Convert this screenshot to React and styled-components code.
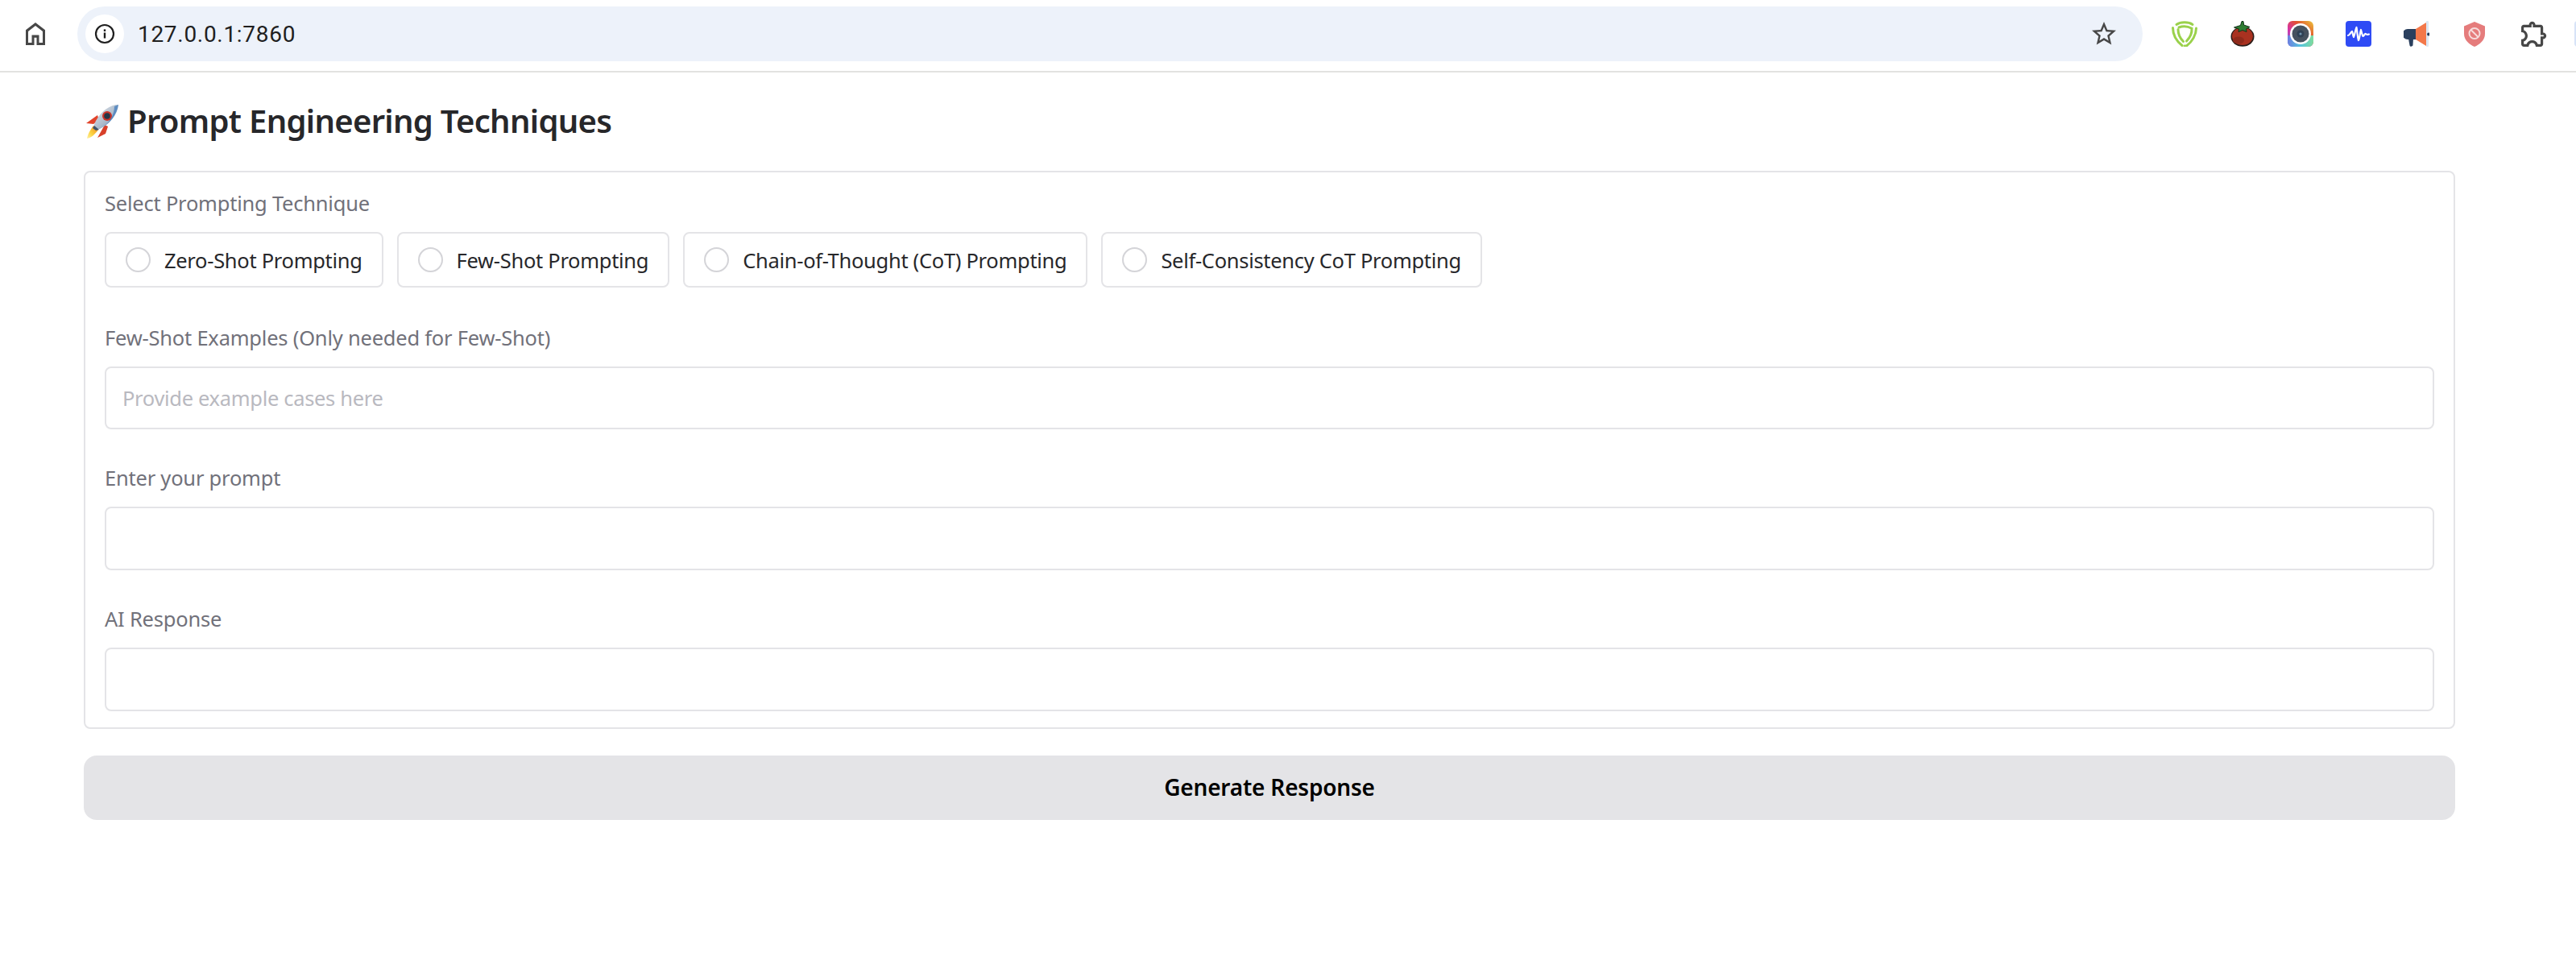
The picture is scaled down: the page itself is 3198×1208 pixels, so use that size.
import React from "react";
import styled, { createGlobalStyle } from "styled-components";

const Global = createGlobalStyle`
  html, body { margin: 0; padding: 0; background: #fff; }
  body { font-family: "Noto Sans", "Liberation Sans", sans-serif; }
  * { box-sizing: border-box; }
`;
const Page = styled.div`
  width: 3198px;
  height: 1208px;
  overflow: hidden;
  background: #fff;
`;
const Toolbar = styled.header`
  display: flex;
  align-items: center;
  height: 90px;
  padding: 0 0 4px 32px;
  border-bottom: 2px solid #e2e2e0;
`;
const Home = styled.svg`
  width: 24px;
  height: 28px;
  margin: 0 40px 0 0;
  flex: none;
  fill: #474747;
`;
const Omnibox = styled.div`
  display: flex;
  align-items: center;
  width: 2564px;
  height: 68px;
  padding: 0 29px 0 10px;
  border-radius: 34px;
  background: #edf2fa;
  flex: none;
`;
const InfoChip = styled.div`
  display: flex;
  align-items: center;
  justify-content: center;
  width: 48px;
  height: 48px;
  border-radius: 50%;
  background: #fff;
  flex: none;
`;
const Url = styled.span`
  flex: 1;
  margin-left: 17px;
  font: 400 28px "Roboto", sans-serif;
  letter-spacing: 0.7px;
  color: #1f1f1f;
`;
const Star = styled.svg`
  width: 38px;
  height: 36px;
  fill: #474747;
  flex: none;
`;
const Extensions = styled.div`
  display: flex;
  align-items: center;
  gap: 40px;
  margin-left: 36px;
  flex: none;
`;
const ExtIcon = styled.svg`
  width: 32px;
  height: 32px;
  display: block;
  flex: none;
`;
const PuzzleIcon = styled(ExtIcon)`
  margin-left: 2px;
`;
const Avatar = styled.div`
  width: 20px;
  height: 32px;
  margin-left: -6px;
  border-radius: 4px 0 0 4px;
  background: #d7e3f7;
  flex: none;
`;
const Main = styled.main`
  width: 2944px;
  margin-left: 104px;
`;
const Heading = styled.h1`
  display: flex;
  align-items: center;
  gap: 10px;
  height: 44px;
  margin: 37px 0 41px;
  font-size: 40px;
  font-weight: 600;
  letter-spacing: -0.7px;
  color: #27272a;
`;
const Rocket = styled.svg`
  width: 44px;
  height: 44px;
  margin-top: 4px;
  flex: none;
`;
const Panel = styled.section`
  display: flex;
  flex-direction: column;
  gap: 42px;
  padding: 20px 24px;
  border: 2px solid #e4e4e7;
  border-radius: 8px;
`;
const Label = styled.label`
  display: block;
  height: 36px;
  margin-bottom: 18px;
  font-size: 25.5px;
  line-height: 36px;
  letter-spacing: -0.22px;
  color: #71717a;
`;
const RadioRow = styled.div`
  display: flex;
  gap: 17px;
  margin-bottom: 2px;
`;
const RadioCard = styled.label`
  display: flex;
  align-items: center;
  gap: 17px;
  height: 69px;
  padding: 0 24px;
  border: 2px solid #e4e4e7;
  border-radius: 8px;
  font-size: 25.5px;
  letter-spacing: -0.3px;
  color: #27272a;
`;
const Radio = styled.input`
  appearance: none;
  width: 31px;
  height: 31px;
  margin: 0;
  border: 2px solid #d4d4d8;
  border-radius: 50%;
  background: #fff;
  flex: none;
`;
const TextInput = styled.input`
  display: block;
  width: 100%;
  height: ${(p) => (p.$first ? 78 : 79)}px;
  padding: 0 20px;
  border: 2px solid #e4e4e7;
  border-radius: 8px;
  background: #fff;
  outline: none;
  font: 400 25.5px "Noto Sans", sans-serif;
  letter-spacing: -0.32px;
  color: #27272a;
  &::placeholder { color: #b9b9c0; opacity: 1; }
`;
const Generate = styled.button`
  display: block;
  width: 100%;
  height: 80px;
  margin-top: 33px;
  padding: 0 0 2px;
  border: 0;
  border-radius: 16px;
  background: #e4e4e7;
  font: 600 28px "Noto Sans", sans-serif;
  letter-spacing: -0.2px;
  color: #000;
`;

const HomeIcon = () => (
  <Home viewBox="4 3 16 18" preserveAspectRatio="none">
    <path d="M6 19h3v-6h6v6h3v-9l-6-4.500L6 10v9zm-2 2V9l8-6 8 6v12h-7v-6h-2v6H4z" />
  </Home>
);
const InfoIcon = () => (
  <svg width="26" height="26" viewBox="0 0 26 26">
    <circle cx="13" cy="13" r="11" fill="none" stroke="#1f1f1f" strokeWidth="2.2" />
    <rect x="11.8" y="11.5" width="2.4" height="7" fill="#1f1f1f" />
    <rect x="11.8" y="7.4" width="2.4" height="2.6" fill="#1f1f1f" />
  </svg>
);
const StarIcon = () => (
  <Star viewBox="0 0 24 24">
    <path d="M22 9.24l-7.19-.62L12 2 9.19 8.63 2 9.24l5.46 4.73L5.82 21 12 17.27 18.18 21l-1.63-7.03L22 9.24zM12 15.4l-3.76 2.27 1-4.28-3.32-2.88 4.38-.38L12 6.1l1.71 4.04 4.38.38-3.32 2.88 1 4.28L12 15.4z" />
  </Star>
);
const ShieldGreen = () => (
  <ExtIcon viewBox="0 0 32 32" fill="none" stroke="#9ad14b" strokeWidth="3" strokeLinecap="round">
    <path d="M6 4.500C11 1 21 1 26 4.400" />
    <path d="M1.500 8.500C1.500 17 6 25 13 30.500" />
    <path d="M30.500 9C30.500 17 25.500 26 18.500 31L16 31" />
    <path d="M8 10.500C8 16 10.500 21.500 14.500 25.500" />
    <path d="M9 8C14 6 20 6.500 25 9.200C25.400 15 22.500 21 18.500 25" />
  </ExtIcon>
);
const Tomato = () => (
  <ExtIcon viewBox="0 0 32 32">
    <ellipse cx="16" cy="19.500" rx="14.500" ry="12.200" fill="#2a1d19" />
    <ellipse cx="16" cy="19" rx="13" ry="11" fill="#a93220" />
    <ellipse cx="11" cy="24" rx="7" ry="4.500" fill="#8f2a1b" />
    <path d="M15 0.500L17 0.500L17.600 5L25 7.500L20.500 10L21 13.500L16 11.500L11 13.500L11.500 10L5.500 8L13.500 5.500Z" fill="#2e7d32" stroke="#12331a" strokeWidth="1" />
  </ExtIcon>
);
const Camera = () => (
  <ExtIcon viewBox="0 0 32 32">
    <defs>
      <linearGradient id="camA" x1="0" y1="1" x2="1" y2="0">
        <stop offset="0" stopColor="#5a7fe0" />
        <stop offset="0.35" stopColor="#d633a8" />
        <stop offset="0.65" stopColor="#e2502e" />
        <stop offset="1" stopColor="#ecc93e" />
      </linearGradient>
      <linearGradient id="camB" x1="0" y1="0" x2="1" y2="0">
        <stop offset="0" stopColor="#6d7fe0" />
        <stop offset="0.5" stopColor="#55c4dd" />
        <stop offset="1" stopColor="#7fdc9c" />
      </linearGradient>
    </defs>
    <rect width="32" height="32" rx="6" fill="url(#camA)" />
    <path d="M0 18H32V26a6 6 0 0 1-6 6H6a6 6 0 0 1-6-6Z" fill="url(#camB)" />
    <circle cx="16" cy="16" r="13" fill="#fff" />
    <circle cx="16" cy="16" r="10.500" fill="#46525f" />
    <circle cx="16" cy="16" r="4.500" fill="#2f4154" />
    <circle cx="16" cy="16" r="1.600" fill="#6f93ad" />
  </ExtIcon>
);
const Wave = () => (
  <ExtIcon viewBox="0 0 32 32">
    <rect width="32" height="32" rx="4" fill="#2f4bf5" />
    <path d="M3 18C5 18 6 14 8 13C9 15 9 19 10 20C11.500 17 12 11 13.500 8C14.500 12 14.500 20 16 24C17.500 21 18 14 19 11C20 14 20.500 18 21.500 19C23 19 24 15 25 16C26 17.500 27 17 29 16.500" fill="none" stroke="#fff" strokeWidth="2.200" strokeLinecap="round" strokeLinejoin="round" />
  </ExtIcon>
);
const Megaphone = () => (
  <ExtIcon viewBox="0 0 32 32">
    <path d="M5 10H15V23H5A6.500 6.500 0 0 1 5 10Z" fill="#2b405e" />
    <path d="M6 22H12L11.500 30.500Q8.500 33 7.500 30.500Z" fill="#2b405e" />
    <path d="M15 10L28 2V31L15 23Z" fill="#f3784a" />
    <rect x="28" y="0" width="3" height="32" rx="1" fill="#dbe7f3" />
    <circle cx="31" cy="16.500" r="2" fill="#2b405e" />
  </ExtIcon>
);
const ShieldRed = () => (
  <ExtIcon viewBox="0 0 32 32">
    <path d="M16 1L29 6.500V16C29 24 22 29.500 16 32C10 29.500 3 24 3 16V6.500Z" fill="#e57c7c" />
    <circle cx="16" cy="15.500" r="6.500" fill="none" stroke="#f7dcdc" strokeWidth="2" />
    <path d="M11.500 11L20.500 20" stroke="#f7dcdc" strokeWidth="2" />
  </ExtIcon>
);
const Puzzle = () => (
  <PuzzleIcon viewBox="2 2 20 20" fill="#474747">
    <path d="M10.500 4.500c.28 0 .5.22.5.5v2h6v6h2c.28 0 .5.22.5.5s-.22.5-.5.5h-2v6h-2.120c-.68-1.750-2.390-3-4.380-3s-3.700 1.250-4.380 3H4v-2.120c1.750-.68 3-2.390 3-4.380 0-1.990-1.240-3.700-2.990-4.380L4 7h6V5c0-.28.22-.5.5-.5m0-2C9.120 2.500 8 3.620 8 5H4c-1.100 0-1.990.9-1.990 2v3.800h.29c1.490 0 2.700 1.210 2.700 2.700s-1.210 2.700-2.700 2.700H2V20c0 1.100.9 2 2 2h3.800v-.3c0-1.490 1.210-2.700 2.700-2.700s2.700 1.210 2.700 2.700v.3H17c1.100 0 2-.9 2-2v-4c1.380 0 2.500-1.120 2.500-2.500S20.380 11 19 11V7c0-1.100-.9-2-2-2h-4c0-1.380-1.120-2.500-2.500-2.500z" />
  </PuzzleIcon>
);
const RocketIcon = () => (
  <Rocket viewBox="0 0 44 44">
    <defs>
      <linearGradient id="rkBody" x1="0" y1="0" x2="1" y2="1">
        <stop offset="0" stopColor="#e9edf2" />
        <stop offset="0.55" stopColor="#aebccb" />
        <stop offset="1" stopColor="#5f86b4" />
      </linearGradient>
      <linearGradient id="rkFlame" x1="1" y1="0" x2="0" y2="1">
        <stop offset="0" stopColor="#f2811d" />
        <stop offset="0.6" stopColor="#fbd23f" />
        <stop offset="1" stopColor="#fff2a8" />
      </linearGradient>
    </defs>
    <path d="M17 14L3 24L12 25L19 20Z" fill="#e2432a" />
    <path d="M26 26L17 42L27 37L30 28Z" fill="#d8402a" />
    <path d="M12 27C9 31 5 37 4 43C9 42 14 38 18 32Z" fill="url(#rkFlame)" />
    <path d="M43 1C33 1 22 8 15 21C13 25 12 27 13 29C15 31 17 32 20 31C32 25 42 13 43 1Z" fill="url(#rkBody)" />
    <path d="M13 27L19 32L15 33L11 30Z" fill="#40536b" />
    <circle cx="29" cy="15" r="6" fill="#c9332a" />
    <circle cx="29" cy="15" r="3.800" fill="#243648" />
    <path d="M43 1C41 13 33 24 23 29C32 24 38 13 38 3Z" fill="#3c79bd" opacity="0.7" />
  </Rocket>
);

const techniques = [
  "Zero-Shot Prompting",
  "Few-Shot Prompting",
  "Chain-of-Thought (CoT) Prompting",
  "Self-Consistency CoT Prompting",
];

export default function App() {
  return (
    <Page>
      <Global />
      <Toolbar>
        <HomeIcon />
        <Omnibox>
          <InfoChip><InfoIcon /></InfoChip>
          <Url>127.0.0.1:7860</Url>
          <StarIcon />
        </Omnibox>
        <Extensions>
          <ShieldGreen />
          <Tomato />
          <Camera />
          <Wave />
          <Megaphone />
          <ShieldRed />
          <Puzzle />
          <Avatar />
        </Extensions>
      </Toolbar>
      <Main>
        <Heading><RocketIcon />Prompt Engineering Techniques</Heading>
        <Panel>
          <div>
            <Label>Select Prompting Technique</Label>
            <RadioRow>
              {techniques.map((t) => (
                <RadioCard key={t}><Radio type="radio" name="technique" />{t}</RadioCard>
              ))}
            </RadioRow>
          </div>
          <div>
            <Label>Few-Shot Examples (Only needed for Few-Shot)</Label>
            <TextInput $first placeholder="Provide example cases here" />
          </div>
          <div>
            <Label>Enter your prompt</Label>
            <TextInput />
          </div>
          <div>
            <Label>AI Response</Label>
            <TextInput />
          </div>
        </Panel>
        <Generate>Generate Response</Generate>
      </Main>
    </Page>
  );
}
